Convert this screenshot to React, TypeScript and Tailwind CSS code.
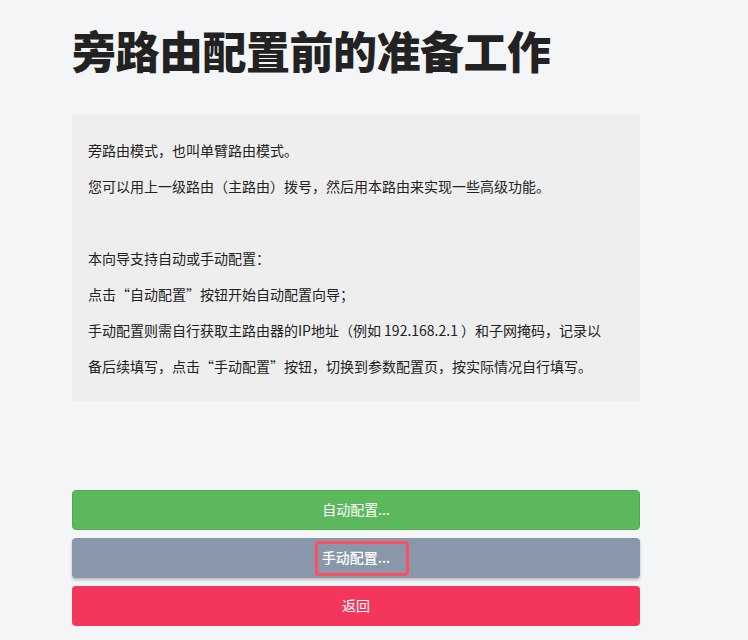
import React from "react";

const bodyFont = { fontFamily: '"Noto Sans CJK SC", "Noto Sans", sans-serif' };

export default function App() {
  return (
    <div className="min-h-[640px] w-full bg-[#f4f5f7] text-[#333]" style={bodyFont}>
      <div className="w-[568px] ml-[72px] pt-[26px] pb-[13px]">
        <h1 className="text-[44px] leading-[48px] font-black text-[#222] tracking-[-0.5px]">
          旁路由配置前的准备工作
        </h1>

        {/* Description */}
        <div className="mt-[41px] bg-[#eeeeee] px-4 pt-[17px] pb-[18px] text-[14px] leading-[36px] text-[#222]">
          <p>旁路由模式，也叫单臂路由模式。</p>
          <p>您可以用上一级路由（主路由）拨号，然后用本路由来实现一些高级功能。</p>
          <p>&nbsp;</p>
          <p>本向导支持自动或手动配置：</p>
          <p>点击“自动配置”按钮开始自动配置向导；</p>
          <p className="whitespace-nowrap">
            手动配置则需自行获取主路由器的IP地址（例如 192.168.2.1 ）和子网掩码，记录以
            <br />
            备后续填写，点击“手动配置”按钮，切换到参数配置页，按实际情况自行填写。
          </p>
        </div>

        {/* Actions */}
        <div className="mt-[88px] flex flex-col gap-2">
          <button className="flex h-10 w-full items-center justify-center rounded-[4px] border border-[#4cae4c] bg-[#5cb85c] pb-[2px] text-[14px] text-white">
            自动配置...
          </button>
          <button className="relative flex h-10 w-full items-center justify-center rounded-[4px] bg-[#8898aa] pb-[2px] text-[14px] font-medium text-white shadow-[0_2px_3px_rgba(0,0,0,0.25)]">
            手动配置...
            <span className="absolute left-[243px] top-[3px] h-[35px] w-[94px] rounded-[4px] border-[3px] border-[#fd4e63]" />
          </button>
          <button className="flex h-10 w-full items-center justify-center rounded-[4px] bg-[#f5365c] pb-[2px] text-[14px] text-white">
            返回
          </button>
        </div>
      </div>
    </div>
  );
}
